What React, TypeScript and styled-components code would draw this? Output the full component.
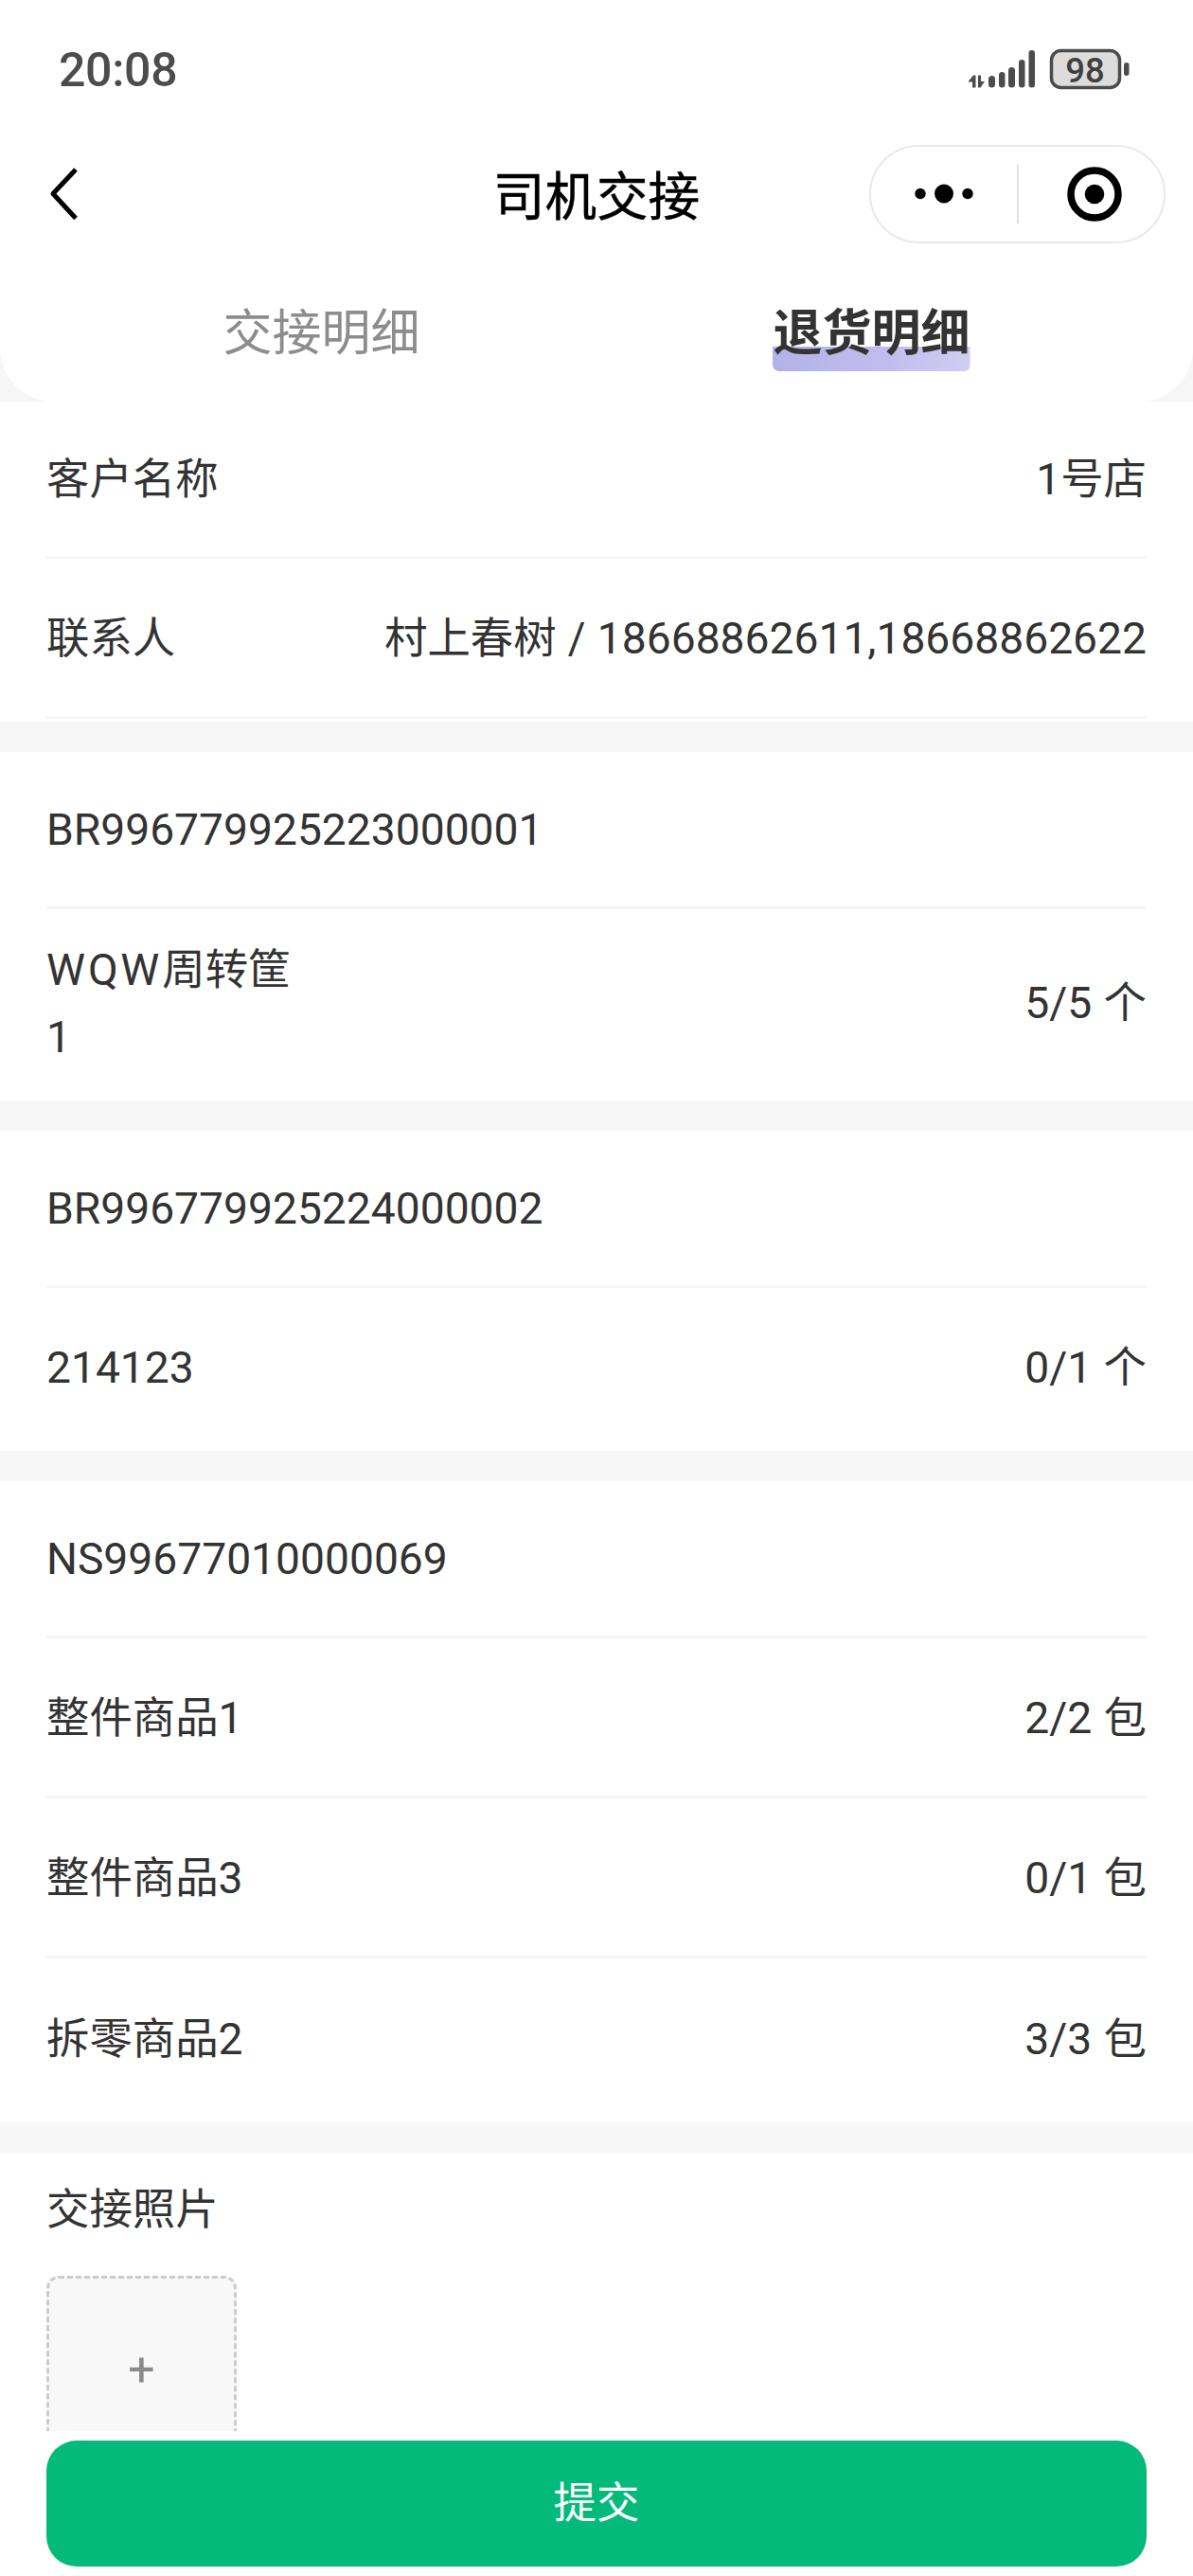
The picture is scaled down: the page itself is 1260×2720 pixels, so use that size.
import React from 'react';
import styled, { createGlobalStyle } from 'styled-components';

const GlobalStyle = createGlobalStyle`
  *, *::before, *::after { box-sizing: border-box; }
  html, body { margin: 0; padding: 0; background: #fff; }
  body { font-family: Roboto, "Noto Sans CJK SC", sans-serif; color: #333; }
  button { font: inherit; border: 0; padding: 0; background: none; color: inherit; }
`;

const Screen = styled.div`
  display: flex;
  flex-direction: column;
  width: 1260px;
  height: 2720px;
  overflow: hidden;
  background: #f6f6f6;
`;

const Header = styled.header`
  flex: none;
  height: 424px;
  background: #fff;
  border-radius: 0 0 56px 56px;
`;

const StatusBar = styled.div`
  display: flex;
  justify-content: space-between;
  align-items: center;
  height: 145px;
  padding: 0 67px 0 62px;
`;

const Clock = styled.span`
  padding-top: 2px;
  font-size: 50px;
  font-weight: 500;
  line-height: 60px;
  letter-spacing: -0.3px;
  color: #4c4c4c;
`;

const StatusIcons = styled.svg`
  display: block;
`;

const NavBar = styled.div`
  display: grid;
  grid-template-columns: 1fr auto 1fr;
  align-items: center;
  height: 120px;
  padding: 0 29px;
`;

const BackButton = styled.button`
  display: flex;
  justify-self: start;
  margin-left: 21px;
`;

const Title = styled.h1`
  margin: 0;
  padding-top: 6px;
  font-size: 54.6px;
  font-weight: 400;
  line-height: 72px;
  color: #000;
  -webkit-text-stroke: 0.5px #000;
`;

const Capsule = styled.div`
  display: flex;
  align-items: center;
  justify-self: end;
  width: 313px;
  height: 104px;
  border: 2px solid #e9e9e9;
  border-radius: 52px;
`;

const CapsuleButton = styled.button<{ $inset?: number }>`
  flex: none;
  width: 153px;
  display: flex;
  justify-content: center;
  padding-left: ${(p) => p.$inset ?? 0}px;
`;

const CapsuleDivider = styled.i`
  flex: none;
  width: 2px;
  height: 62px;
  margin-left: 1px;
  background: #e0e0e0;
`;

const Tabs = styled.div`
  display: flex;
  padding: 48px 49px 0;
`;

const TabCell = styled.div`
  flex: 1;
  display: flex;
  justify-content: center;
`;

const TabLabel = styled.button<{ $active?: boolean }>`
  height: 79px;
  font-size: 52px;
  line-height: 77px;
  border-radius: 7px;
  font-weight: ${(p) => (p.$active ? 700 : 400)};
  color: ${(p) => (p.$active ? '#333' : '#8c8c8c')};
  background: ${(p) => (p.$active ? 'linear-gradient(100deg, #b2b2e6, #c3bdee 60%, #d0cdf3) bottom / 100% 26px no-repeat' : 'none')};
`;

const Content = styled.main`
  flex: 1;
  min-height: 0;
  display: flex;
  flex-direction: column;
  gap: 32px;
  overflow: hidden;
`;

const Group = styled.section`
  flex: none;
  padding: 0 49px 3px;
  background: #fff;
`;

const Row = styled.div<{ $height?: number; $line?: boolean; $lead?: boolean }>`
  display: flex;
  align-items: center;
  justify-content: space-between;
  height: ${(p) => p.$height ?? (p.$lead ? 166 : 169)}px;
  padding-top: ${(p) => (p.$lead ? 1 : 3)}px;
  border-bottom: 3px solid ${(p) => (p.$line === false ? 'transparent' : '#f6f6f6')};
  font-size: 45.4px;
  line-height: 71px;
  word-spacing: 1px;
  white-space: nowrap;
`;

const Name = styled.span`
  display: flex;
  flex-direction: column;
`;

const Latin = styled.span<{ $track?: number }>`
  font-size: 46.2px;
  line-height: 1;
  letter-spacing: ${(p) => p.$track ?? 0}px;
`;

const Photos = styled.section`
  flex: none;
  padding: 25px 49px 0;
  background: #fff;
`;

const PhotosTitle = styled.h2`
  margin: 0;
  font-size: 45.4px;
  font-weight: 400;
  line-height: 71px;
`;

const AddPhoto = styled.button`
  display: flex;
  align-items: center;
  justify-content: center;
  width: 201px;
  height: 201px;
  margin-top: 34px;
  padding-bottom: 4px;
  border: 3px dashed #ccc;
  border-radius: 13px;
  background: #f8f8f8;
  font-size: 50px;
  line-height: 1;
  color: #8a8a8a;
`;

const Footer = styled.footer`
  flex: none;
  height: 153px;
  padding: 10px 49px;
  background: #fff;
`;

const Submit = styled.button`
  display: block;
  width: 100%;
  height: 133px;
  border-radius: 32px;
  background: #03ba7a;
  color: #fff;
  font-size: 45.4px;
  line-height: 131px;
`;

const Qty = ({ count, unit }: { count: string; unit: string }) => (
  <span>
    <Latin>{count}</Latin> {unit}
  </span>
);

export default function App() {
  return (
    <>
      <GlobalStyle />
      <Screen>
        <Header>
          <StatusBar>
            <Clock>20:08</Clock>
            <StatusIcons width="170" height="44" viewBox="1023 50 170 44">
              <g fill="#4c4c4c">
                <path d="M1023 84.5 L1028 78.5 H1030.5 V91.5 H1027 V85.5 H1023Z" />
                <path d="M1033 78.5 H1036 V85 H1040 L1035.5 91.5 H1033Z" />
                <rect x="1044" y="79" width="7" height="12.5" rx="3.5" />
                <rect x="1055" y="75" width="6.5" height="16.5" rx="3.25" />
                <rect x="1065" y="70" width="7" height="21.5" rx="3.5" />
                <rect x="1076" y="62" width="6.5" height="29.5" rx="3.25" />
                <rect x="1086.5" y="52" width="6.5" height="39.5" rx="3.25" />
                <rect x="1187" y="65" width="5.5" height="14" rx="2.75" />
              </g>
              <rect x="1110.5" y="52.5" width="72" height="39" rx="10" fill="#dcdcdc" stroke="#4c4c4c" strokeWidth="3.5" />
              <text x="1146" y="85.5" textAnchor="middle" fontFamily="Roboto, sans-serif" fontSize="36.5" fontWeight="500" fill="#404040">98</text>
            </StatusIcons>
          </StatusBar>
          <NavBar>
            <BackButton aria-label="返回">
              <svg width="34" height="58" viewBox="0 0 34 58" fill="none" stroke="#000" strokeWidth="5" strokeLinejoin="round">
                <path d="M30 3 L6 28.5 L30 54.5" />
              </svg>
            </BackButton>
            <Title>司机交接</Title>
            <Capsule>
              <CapsuleButton aria-label="更多">
                <svg width="62" height="22" viewBox="0 0 62 22">
                  <circle cx="6" cy="10.5" r="5.7" />
                  <circle cx="31" cy="10.5" r="10" />
                  <circle cx="56" cy="10.5" r="5.7" />
                </svg>
              </CapsuleButton>
              <CapsuleDivider />
              <CapsuleButton aria-label="关闭" $inset={7}>
                <svg width="60" height="60" viewBox="0 0 60 60">
                  <circle cx="30" cy="30" r="25" fill="none" stroke="#000" strokeWidth="7.5" />
                  <circle cx="30" cy="30" r="10.3" />
                </svg>
              </CapsuleButton>
            </Capsule>
          </NavBar>
          <Tabs>
            <TabCell><TabLabel>交接明细</TabLabel></TabCell>
            <TabCell><TabLabel $active>退货明细</TabLabel></TabCell>
          </Tabs>
        </Header>
        <Content>
          <Group>
            <Row $lead>
              <Name>客户名称</Name>
              <span><Latin>1</Latin>号店</span>
            </Row>
            <Row>
              <Name>联系人</Name>
              <span>村上春树 / <Latin>18668862611,18668862622</Latin></span>
            </Row>
          </Group>
          <Group>
            <Row $lead><Latin>BR996779925223000001</Latin></Row>
            <Row $height={199} $line={false}>
              <Name>
                <span><Latin $track={3}>WQW</Latin>周转筐</span>
                <span><Latin>1</Latin></span>
              </Name>
              <Qty count="5/5" unit="个" />
            </Row>
          </Group>
          <Group>
            <Row $lead><Latin>BR996779925224000002</Latin></Row>
            <Row $line={false}>
              <Latin>214123</Latin>
              <Qty count="0/1" unit="个" />
            </Row>
          </Group>
          <Group>
            <Row $lead><Latin>NS99677010000069</Latin></Row>
            <Row>
              <span>整件商品<Latin>1</Latin></span>
              <Qty count="2/2" unit="包" />
            </Row>
            <Row>
              <span>整件商品<Latin>3</Latin></span>
              <Qty count="0/1" unit="包" />
            </Row>
            <Row $height={170} $line={false}>
              <span>拆零商品<Latin>2</Latin></span>
              <Qty count="3/3" unit="包" />
            </Row>
          </Group>
          <Photos>
            <PhotosTitle>交接照片</PhotosTitle>
            <AddPhoto aria-label="添加照片">+</AddPhoto>
          </Photos>
        </Content>
        <Footer>
          <Submit>提交</Submit>
        </Footer>
      </Screen>
    </>
  );
}
